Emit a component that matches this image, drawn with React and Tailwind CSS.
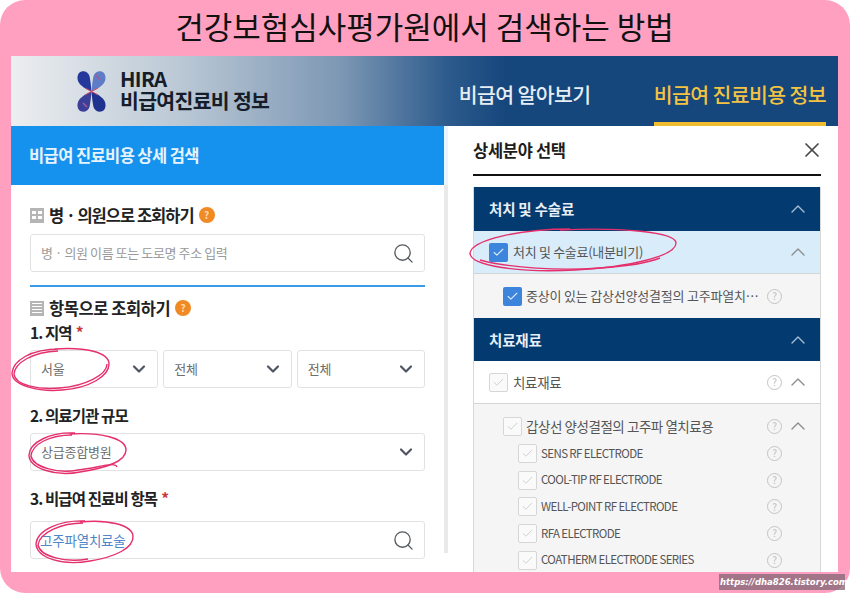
import React from 'react';
import { ChevronDown, ChevronUp, Search, X, Check } from 'lucide-react';

const FONT = '"Noto Sans CJK KR", "Noto Sans", sans-serif';

function HelpOrange() {
  return (
    <span className="ml-[5px] flex h-[16px] w-[16px] items-center justify-center rounded-full bg-[#f08a24] text-[10px] font-bold leading-none text-[#ffd9b0]">?</span>
  );
}

function HelpGray() {
  return (
    <span className="flex h-[15px] w-[15px] shrink-0 items-center justify-center rounded-full border border-[#c4c4c4] text-[10px] leading-none text-[#bdbdbd]">?</span>
  );
}

function Box({ checked }) {
  if (checked) {
    return (
      <span className="flex h-[19px] w-[19px] shrink-0 items-center justify-center rounded-[2px] bg-[#3c84dc]">
        <Check size={13} color="#dcebfb" strokeWidth={2} />
      </span>
    );
  }
  return (
    <span className="flex h-[19px] w-[19px] shrink-0 items-center justify-center rounded-[2px] border border-[#d6d6d6] bg-[#fafafa]">
      <Check size={13} color="#c8c8c8" strokeWidth={1.5} />
    </span>
  );
}

function SelectBox({ label, className }) {
  return (
    <div className={`flex h-[38px] items-center justify-between rounded-[3px] border border-[#e2e2e2] bg-white pl-[10px] pr-[8px] ${className}`}>
      <span className="text-[13px] tracking-[-0.2px] text-[#6e6e6e]">{label}</span>
      <ChevronDown size={20} color="#4f5560" strokeWidth={2.6} />
    </div>
  );
}

function SearchBox({ children }) {
  return (
    <div className="flex h-[38px] items-center justify-between rounded-[3px] border border-[#e2e2e2] bg-white pl-[10px] pr-[9px]">
      {children}
      <Search size={23} color="#555b60" strokeWidth={1.4} />
    </div>
  );
}

function NavyRow({ title, height }) {
  return (
    <div className={`flex items-center justify-between bg-[#033a70] pl-[15px] pr-[10px] ${height}`}>
      <span className="text-[14.5px] font-bold tracking-[-0.2px] text-[#e8eef5]">{title}</span>
      <ChevronUp size={24} color="#a9bdd2" strokeWidth={1.4} />
    </div>
  );
}

function ElectrodeRow({ label }) {
  return (
    <div className="flex h-[26.7px] items-center pl-[44px] pr-[38px]">
      <Box />
      <span className="ml-[4px] flex-1 text-[11.5px] tracking-[-0.6px] text-[#555]">{label}</span>
      <HelpGray />
    </div>
  );
}

function Logo() {
  return (
    <svg width="29" height="41" viewBox="0 0 29 41" className="shrink-0">
      <path d="M2 2 C5 -1 11 0 12.5 5 C13.5 10 14 15 14.5 20.5 C9 18 3 15 1 10 C0 7 0.5 4 2 2Z" fill="#24399b" />
      <path d="M27 2 C24 -1 18 0 16.5 5 C15.5 10 15 15 14.5 20.5 C20 18 26 15 28 10 C29 7 28.5 4 27 2Z" fill="#5f7cc6" />
      <path d="M2 39 C5 42 11 41 12.5 36 C13.5 31 14 26 14.5 20.5 C9 23 3 26 1 31 C0 34 0.5 37 2 39Z" fill="#3b3f97" />
      <path d="M27 39 C24 42 18 41 16.5 36 C15.5 31 15 26 14.5 20.5 C20 23 26 26 28 31 C29 34 28.5 37 27 39Z" fill="#1f3290" />
      <path d="M19 4 L23 9 M6 32 L10 36" stroke="#a45a9a" strokeWidth="1.6" />
      <path d="M8 17 L21 24 M21 17 L8 24" stroke="#d8495f" strokeWidth="1" />
    </svg>
  );
}

function Marks() {
  return (
    <svg className="pointer-events-none absolute left-0 top-0" width="850" height="593" fill="none" stroke="#e5306c" strokeWidth="1.4">
      <path d="M60 349 C30 349 13 361 12 373 C12 386 40 392 62 390 C90 388 109 376 109 364 C109 352 85 347 55 349" />
      <path d="M58 351 C32 352 15 363 14 374 C15 385 38 390 60 388 C85 386 107 375 107 364" />
      <path d="M75 433 C50 432 30 442 29 455 C29 468 55 477 80 472 C105 468 126 462 126 450 C126 438 100 432 70 434" />
      <path d="M72 435 C50 435 32 444 31 456 C33 467 58 474 78 470 C98 468 115 461 117 467" />
      <path d="M85 521 C60 520 37 530 36 544 C37 558 62 566 90 561 C115 557 134 548 133 536 C132 525 108 519 80 522" />
      <path d="M83 523 C62 523 40 532 38 545 C40 556 64 563 88 559" />
      <path d="M570 229 C520 229 472 240 470 253 C470 266 520 273 575 270 C630 267 676 256 676 243 C676 232 620 227 560 230" />
      <path d="M480 260 C510 268 560 271 600 268 C630 266 650 262 660 258" />
    </svg>
  );
}

export default function App() {
  return (
    <div className="relative h-[593px] w-[850px] overflow-hidden bg-white" style={{ fontFamily: FONT }}>
      <div className="flex h-full flex-col rounded-[25px] bg-[#ffa0c0] pb-[21px] pl-[11px] pr-[12px]">
        {/* title */}
        <div className="flex h-[56px] shrink-0 items-center justify-center pb-[6px] text-[31px] leading-none text-[#111]">
          건강보험심사평가원에서 검색하는 방법
        </div>

        {/* top bar */}
        <div className="flex h-[70px] shrink-0 items-stretch bg-[linear-gradient(90deg,#eceef0_0%,#bcc9d6_20%,#7c97b4_40%,#2c5a8c_53%,#15467c_60%,#15467c_100%)]">
          <div className="ml-[66px] flex items-center">
            <Logo />
            <div className="ml-[14px] pb-[4px] text-[20.5px] font-bold leading-[22px] tracking-[-0.7px] text-[#161d2a]">
              <div>HIRA</div>
              <div>비급여진료비 정보</div>
            </div>
          </div>
          <div className="ml-auto flex items-stretch pr-[12px]">
            <div className="flex items-center pr-[63px] pt-[6px] text-[20.5px] font-medium tracking-[-0.6px] text-[#e6edf4]">비급여 알아보기</div>
            <div className="flex items-center border-b-[4px] border-[#f0bb2e] pt-[10px] text-[20.5px] font-medium tracking-[-0.6px] text-[#f3c341]">비급여 진료비용 정보</div>
          </div>
        </div>

        {/* body */}
        <div className="flex min-h-0 flex-1 bg-white">
          {/* left panel */}
          <div className="w-[433px] shrink-0">
            <div className="flex h-[59px] items-center bg-[#1592ee] pl-[18px] text-[16.5px] font-bold tracking-[-0.6px] text-[#e6f3fd]">
              비급여 진료비용 상세 검색
            </div>
            <div className="pl-[19px] pr-[19px]">
              <div className="mt-[20px] flex h-[20px] items-center">
                <span className="mr-[5px] grid h-[15px] w-[14px] grid-cols-2 content-center gap-[2px] bg-[#b5b5b5] p-[2px]">
                  <span className="h-[3px] bg-white" /><span className="h-[3px] bg-white" />
                  <span className="h-[3px] bg-white" /><span className="h-[3px] bg-white" />
                </span>
                <span className="text-[16.5px] font-bold tracking-[-1px] text-[#222]">병 · 의원으로 조회하기</span>
                <HelpOrange />
              </div>
              <div className="mt-[9px]">
                <SearchBox>
                  <span className="text-[13px] tracking-[-0.4px] text-[#9a9a9a]">병 · 의원 이름 또는 도로명 주소 입력</span>
                </SearchBox>
              </div>
              <div className="mt-[13px] h-[2px] bg-[#3c9be6]" />

              <div className="mt-[11px] flex h-[20px] items-center">
                <span className="mr-[5px] flex h-[15px] w-[14px] flex-col justify-center gap-[2px] bg-[#b5b5b5] px-[2px]">
                  <span className="h-[1px] bg-white" /><span className="h-[1px] bg-white" /><span className="h-[1px] bg-white" /><span className="h-[1px] bg-white" />
                </span>
                <span className="text-[16.5px] font-bold tracking-[-0.45px] text-[#222]">항목으로 조회하기</span>
                <HelpOrange />
              </div>
              <div className="mt-[5px] flex h-[20px] items-center text-[15.5px] font-bold tracking-[-0.9px] text-[#222]">
                1. 지역<span className="ml-[4px] text-[#c83a3a]">*</span>
              </div>
              <div className="mt-[7px] flex gap-[5px]">
                <SelectBox label="서울" className="flex-1" />
                <SelectBox label="전체" className="flex-1" />
                <SelectBox label="전체" className="flex-1" />
              </div>
              <div className="mt-[18px] flex h-[20px] items-center text-[15.5px] font-bold tracking-[-0.9px] text-[#222]">2. 의료기관 규모</div>
              <div className="mt-[7px]">
                <SelectBox label="상급종합병원" />
              </div>
              <div className="mt-[18px] flex h-[20px] items-center text-[15.5px] font-bold tracking-[-0.9px] text-[#222]">
                3. 비급여 진료비 항목<span className="ml-[4px] text-[#c83a3a]">*</span>
              </div>
              <div className="mt-[12px]">
                <SearchBox>
                  <span className="-ml-[1px] text-[13.5px] tracking-[-0.2px] text-[#4f86c6]">고주파열치료술</span>
                </SearchBox>
              </div>
            </div>
          </div>

          {/* divider */}
          <div className="flex w-[4px] shrink-0 flex-col">
            <div className="h-[59px] bg-[#eaf5fd]" />
            <div className="h-[368px] bg-[#e9e9e9]" />
          </div>

          {/* right panel */}
          <div className="min-w-0 flex-1 overflow-hidden pl-[25px] pr-[17px]">
            <div className="flex h-[50px] items-center justify-between border-b-[2px] border-[#111]">
              <span className="text-[16.5px] font-bold tracking-[-0.3px] text-[#1c1c1c]">상세분야 선택</span>
              <X size={24} color="#4a4a4a" strokeWidth={1.7} className="mr-[-3px]" />
            </div>
            <div className="mt-[11px] border-x border-[#d8d8d8]">
              <NavyRow title="처치 및 수술료" height="h-[44px]" />
              <div className="flex h-[43px] items-center border-b border-[#d4d4d4] bg-[#d8ecfa] pl-[15px] pr-[10px]">
                <Box checked />
                <span className="ml-[5px] flex-1 text-[13px] tracking-[-0.3px] text-[#555]">처치 및 수술료(내분비기)</span>
                <ChevronUp size={24} color="#8c8c8c" strokeWidth={1.4} />
              </div>
              <div className="flex h-[44px] items-center bg-[#f5f5f5] pl-[29px] pr-[38px]">
                <Box checked />
                <span className="ml-[4px] flex-1 overflow-hidden whitespace-nowrap text-[13px] tracking-[-0.2px] text-[#555]">중상이 있는 갑상선양성결절의 고주파열치…</span>
                <HelpGray />
              </div>
              <NavyRow title="치료재료" height="h-[43px]" />
              <div className="flex h-[43px] items-center border-b border-[#d4d4d4] bg-white pl-[15px] pr-[10px]">
                <Box />
                <span className="ml-[5px] flex-1 text-[13.5px] tracking-[-0.3px] text-[#555]">치료재료</span>
                <HelpGray />
                <ChevronUp size={24} color="#8c8c8c" strokeWidth={1.4} className="ml-[4px]" />
              </div>
              <div className="bg-[#f5f5f5] pt-[10px]">
                <div className="flex h-[24px] items-center pl-[29px] pr-[10px]">
                  <Box />
                  <span className="ml-[4px] flex-1 text-[13.5px] tracking-[-0.45px] text-[#555]">갑상선 양성결절의 고주파 열치료용</span>
                  <HelpGray />
                  <ChevronUp size={24} color="#8c8c8c" strokeWidth={1.4} className="ml-[4px]" />
                </div>
                <div className="mt-[2px]">
                  <ElectrodeRow label="SENS RF ELECTRODE" />
                  <ElectrodeRow label="COOL-TIP RF ELECTRODE" />
                  <ElectrodeRow label="WELL-POINT RF ELECTRODE" />
                  <ElectrodeRow label="RFA ELECTRODE" />
                  <ElectrodeRow label="COATHERM ELECTRODE SERIES" />
                </div>
              </div>
            </div>
          </div>
        </div>
      </div>

      <Marks />
      <div className="absolute left-[719px] top-[574px] flex h-[16px] w-[126px] items-center whitespace-nowrap bg-[#8a6a78]/80 pl-[1px] text-[8.5px] font-bold italic text-white" style={{ fontFamily: '"DejaVu Sans", sans-serif' }}>
        https://dha826.tistory.com
      </div>
    </div>
  );
}
